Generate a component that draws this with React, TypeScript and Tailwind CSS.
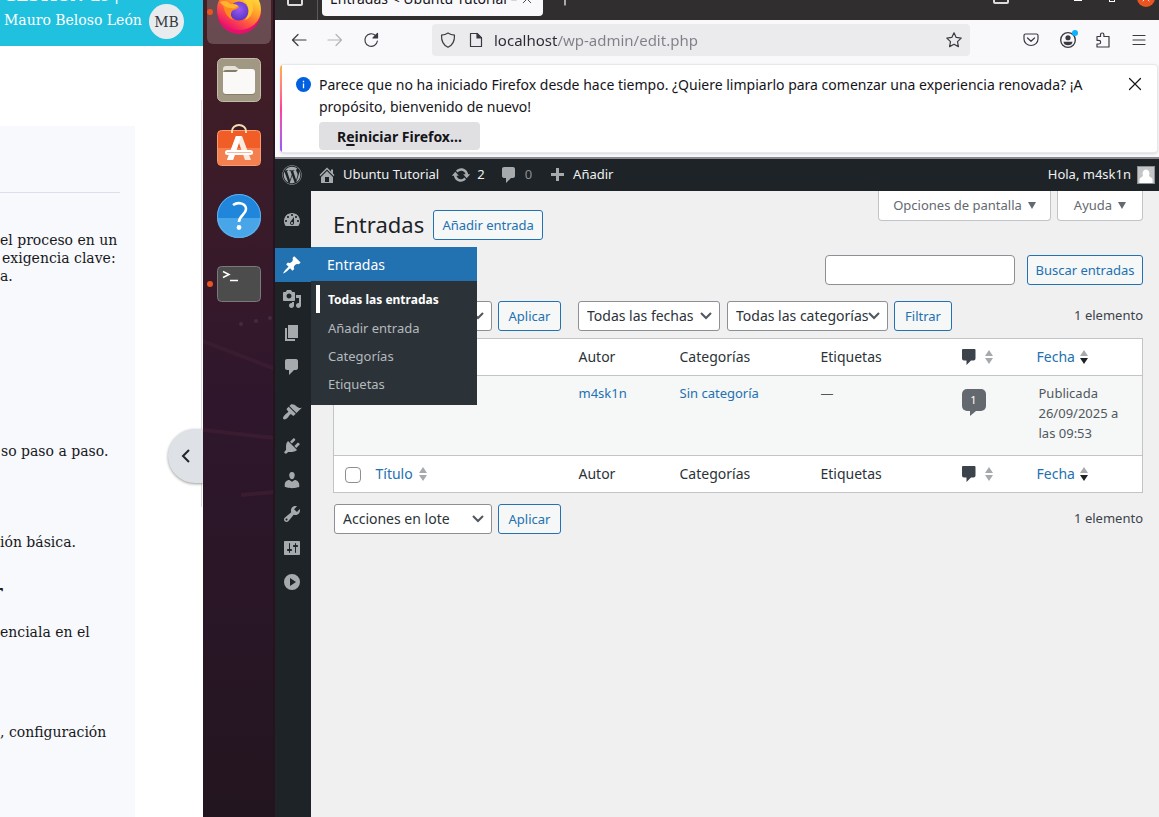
import type { ReactNode } from "react";
import { FaWordpress } from "react-icons/fa";

const dash = {
  home: "M16 8.5l1.53 1.53-1.06 1.06L10 4.6l-6.47 6.49-1.06-1.06L10 2.5l4 4v-2h2v4zm-6-2.46l6 5.99V18H4v-5.97zM12 17v-5H8v5h4z",
  update:
    "M10.2 3.28c3.53 0 6.43 2.61 6.92 6h2.08l-3.5 4-3.5-4h2.32c-.45-1.97-2.21-3.45-4.32-3.45-1.45 0-2.73.71-3.54 1.78L4.95 5.66C6.23 4.2 8.11 3.28 10.2 3.28zm-.4 13.44c-3.52 0-6.43-2.61-6.92-6H.8l3.5-4c1.17 1.33 2.33 2.67 3.5 4H5.48c.45 1.97 2.21 3.45 4.32 3.45 1.45 0 2.73-.71 3.54-1.78l1.71 1.95c-1.28 1.46-3.15 2.38-5.25 2.38z",
  comments: "M5 2h9c1.1 0 2 .9 2 2v7c0 1.1-.9 2-2 2h-2l-5 5v-5H5c-1.1 0-2-.9-2-2V4c0-1.1.9-2 2-2z",
  plus: "M17 8v3h-5v5H9v-5H4V8h5V3h3v5h5z",
  dashboard:
    "M3.76 16h12.48c1.1-1.37 1.76-3.11 1.76-5 0-4.42-3.58-8-8-8s-8 3.58-8 8c0 1.89.66 3.63 1.76 5zM10 4c.55 0 1 .45 1 1s-.45 1-1 1-1-.45-1-1 .45-1 1-1zM6 6c.55 0 1 .45 1 1s-.45 1-1 1-1-.45-1-1 .45-1 1-1zm8 0c.55 0 1 .45 1 1s-.45 1-1 1-1-.45-1-1 .45-1 1-1zm-5.37 5.55L12 7v6c0 1.1-.9 2-2 2s-2-.9-2-2c0-.57.24-1.08.63-1.45zM4 10c.55 0 1 .45 1 1s-.45 1-1 1-1-.45-1-1 .45-1 1-1zm12 0c.55 0 1 .45 1 1s-.45 1-1 1-1-.45-1-1 .45-1 1-1zm-5 3c0-.55-.45-1-1-1s-1 .45-1 1 .45 1 1 1 1-.45 1-1z",
  post: "M10.44 3.02l1.82-1.82 6.36 6.35-1.83 1.82c-1.05-.68-2.48-.57-3.41.36l-.75.75c-.92.93-1.04 2.35-.35 3.41l-1.83 1.82-2.41-2.41-2.8 2.79c-.42.42-3.38 2.71-3.8 2.29s1.86-3.39 2.28-3.81l2.79-2.79L4.1 9.36l1.83-1.82c1.05.69 2.48.57 3.4-.36l.75-.75c.93-.92 1.05-2.35.36-3.41z",
  media:
    "M13 11V4c0-.55-.45-1-1-1h-1.67L9 1H5L3.67 3H2c-.55 0-1 .45-1 1v7c0 .55.45 1 1 1h10c.55 0 1-.45 1-1zM7 4.5c1.38 0 2.5 1.12 2.5 2.5S8.38 9.5 7 9.5 4.5 8.38 4.5 7 5.62 4.5 7 4.5zM14 6h5v10.5c0 1.38-1.12 2.5-2.5 2.5S14 17.88 14 16.5s1.12-2.5 2.5-2.5c.17 0 .34.02.5.05V9h-3V6zm-4 8.05V13h2v3.5c0 1.38-1.12 2.5-2.5 2.5S7 17.88 7 16.5 8.12 14 9.5 14c.17 0 .34.02.5.05z",
  page: "M6 15V2h10v13H6zm-1 1h8v2H3V5h2v11z",
  appearance:
    "M14.48 11.06L7.41 3.99l1.5-1.5c.5-.56 2.3-.47 3.51.32 1.21.8 1.43 1.28 2.91 2.1 1.18.64 2.45 1.26 4.45.85zm-.71.71L6.7 4.7 4.93 6.47c-.39.39-.39 1.02 0 1.41l1.06 1.06c.39.39.39 1.03 0 1.42-.6.6-1.43 1.11-2.21 1.69-.35.26-.7.53-1.01.84C1.43 14.23.4 16.08 1.4 17.07c.99 1 2.84-.03 4.18-1.36.31-.31.58-.66.85-1.02.57-.78 1.08-1.61 1.69-2.21.39-.39 1.02-.39 1.41 0l1.06 1.06c.39.39 1.02.39 1.41 0z",
  plugins:
    "M13.11 4.36L9.87 7.6 8 5.73l3.24-3.24c.35-.34 1.05-.2 1.56.32.52.51.66 1.21.31 1.55zm-8 1.77l.91-1.12 9.01 9.01-1.19.84c-.71.71-2.63 1.16-3.82 1.16H6.14L4.9 17.26c-.59.59-1.54.59-2.12 0-.59-.58-.59-1.53 0-2.12l1.24-1.24v-3.88c0-1.13.4-3.19 1.09-3.89zm7.26 3.97l3.24-3.24c.34-.35 1.04-.21 1.55.31.52.51.66 1.21.31 1.55l-3.24 3.25z",
  users:
    "M10 9.25c-2.27 0-2.73-3.44-2.73-3.44C7 4.02 7.82 2 9.97 2c2.16 0 2.98 2.02 2.71 3.81 0 0-.41 3.44-2.68 3.44zm0 2.57L12.72 10c2.39 0 4.52 2.33 4.52 4.53v2.49s-3.65 1.13-7.24 1.13c-3.65 0-7.24-1.13-7.24-1.13v-2.49c0-2.25 1.94-4.48 4.47-4.48z",
  tools:
    "M16.68 9.77c-1.34 1.34-3.3 1.67-4.95.99l-5.41 6.52c-.99.99-2.59.99-3.58 0s-.99-2.59 0-3.57l6.52-5.42c-.68-1.65-.35-3.61.99-4.95 1.28-1.28 3.12-1.62 4.72-1.06l-2.89 2.89 2.82 2.82 2.86-2.87c.53 1.58.18 3.39-1.08 4.65zM3.81 16.21c.4.39 1.04.39 1.43 0 .4-.4.4-1.04 0-1.43-.39-.4-1.03-.4-1.43 0-.39.39-.39 1.03 0 1.43z",
  settings:
    "M18 16V4c0-.55-.45-1-1-1H3c-.55 0-1 .45-1 1v12c0 .55.45 1 1 1h14c.55 0 1-.45 1-1zM8 11h1c.55 0 1 .45 1 1s-.45 1-1 1H8v1.5c0 .28-.22.5-.5.5s-.5-.22-.5-.5V13H6c-.55 0-1-.45-1-1s.45-1 1-1h1V5.5c0-.28.22-.5.5-.5s.5.22.5.5V11zm5-2h-1c-.55 0-1-.45-1-1s.45-1 1-1h1V5.5c0-.28.22-.5.5-.5s.5.22.5.5V7h1c.55 0 1 .45 1 1s-.45 1-1 1h-1v5.5c0 .28-.22.5-.5.5s-.5-.22-.5-.5V9z",
  collapse: "M10 2a8 8 0 1 0 0 16a8 8 0 0 0 0-16zM8 6l6 4l-6 4z",
};

function Dashicon({ name, className }: { name: keyof typeof dash; className?: string }) {
  return (
    <svg viewBox="0 0 20 20" fill="currentColor" fillRule="evenodd" className={`size-5 shrink-0 ${className ?? ""}`} aria-hidden="true">
      <path d={dash[name]} />
    </svg>
  );
}

/* ---------- Course page at the far left ---------- */

function CoursePage() {
  return (
    <section className="relative w-[203px] shrink-0 overflow-hidden bg-white font-['DejaVu_Serif',serif] text-sm leading-[18px] text-[#16181b]">
      <header className="h-[46px] bg-[#1fc1df] text-white">
        <div className="flex h-1 items-end overflow-hidden whitespace-nowrap pl-1 text-[15px] leading-[15px]">
          <span className="w-[110px] shrink-0 font-bold">GESTIÓN de</span>
          <span>|</span>
        </div>
        <div className="flex items-center gap-1 pl-1">
          <span className="w-[141px] whitespace-nowrap pb-1">Mauro Beloso León</span>
          <span className="flex size-[35px] items-center justify-center rounded-full bg-[#e9ecef] text-[#343a40]">MB</span>
        </div>
      </header>
      <div className="mt-20 min-h-[700px] w-[135px] whitespace-nowrap bg-[#f8f9fc]">
        <div className="w-[120px] border-b border-[#dde0ea] pt-[66px]" />
        <p className="pt-[38px]">el proceso en un</p>
        <p className="pl-[2px]">exigencia clave:</p>
        <p>a.</p>
        <p className="pt-[157px] pl-[1px]">so paso a paso.</p>
        <p className="pt-[73px]">ión básica.</p>
        <p className="mt-7 h-[26px] overflow-hidden text-xl font-bold leading-[26px]">
          <span className="-ml-2">r</span>
        </p>
        <p className="pt-[18px]">enciala en el</p>
        <p className="pt-[82px]">, configuración</p>
      </div>
      <div className="absolute right-px top-[100px] h-[407px] w-px bg-[#dcdde0]" />
      <button
        aria-label="Abrir panel"
        className="absolute right-0 top-[429px] flex h-[54px] w-[35px] items-center justify-center rounded-l-full bg-[#dee2e6] shadow-[0_1px_3px_rgba(0,0,0,0.4)]"
      >
        <svg viewBox="0 0 12 16" className="h-4 w-3" fill="none" stroke="#212529" strokeWidth="2">
          <path d="M9 2L3 8l6 6" />
        </svg>
      </button>
    </section>
  );
}

/* ---------- Ubuntu dock ---------- */

function FirefoxIcon() {
  return (
    <svg viewBox="0 0 48 48" className="size-12">
      <defs>
        <linearGradient id="ffBody" x1="0.85" y1="0.1" x2="0.25" y2="0.95">
          <stop offset="0" stopColor="#ffe640" />
          <stop offset="0.4" stopColor="#ff9a27" />
          <stop offset="0.7" stopColor="#ff4f45" />
          <stop offset="1" stopColor="#e9126f" />
        </linearGradient>
        <radialGradient id="ffGlobe" cx="0.5" cy="0.4" r="0.6">
          <stop offset="0" stopColor="#9a5cf5" />
          <stop offset="1" stopColor="#5b34c4" />
        </radialGradient>
      </defs>
      <circle cx="24" cy="24" r="22" fill="#e8106c" />
      <path d="M2 22a22 20 0 0 0 44 0C46 9 37 2 24 2S2 9 2 22z" fill="url(#ffBody)" />
      <circle cx="24" cy="23" r="9.5" fill="url(#ffGlobe)" />
      <path d="M8 15c4-2 8-1 10 2 4 0 6 1 6 2-2 3-5 2-7 4-2 3-1 7 2 9-5-1-10-6-11-17z" fill="#ff8a1e" />
      <path d="M5 14c4-2 8-1 10 2 4 0 7 0 8 2-2 2-5 3-7 2-4 0-8-2-11-6z" fill="#ffb52e" />
      <path d="M28 4c9 5 12 13 9 21-1 3-4 6-7 7 6-8 4-15-1-19-3-3-2-6-1-9z" fill="#ffcf35" opacity=".8" />
    </svg>
  );
}

function FilesIcon() {
  return (
    <svg viewBox="0 0 48 48" className="size-12">
      <rect x="2.500" y="2.500" width="43" height="43" rx="5" fill="#a09883" stroke="#c2bca9" />
      <path d="M8 13a3 3 0 0 1 3-3h9l4 3v10H8z" fill="#e6e1d6" />
      <rect x="8" y="14" width="32" height="25" rx="3" fill="#857d6a" />
      <path d="M8 16h13l3-3h13a3 3 0 0 1 3 3v19a3 3 0 0 1-3 3H11a3 3 0 0 1-3-3z" fill="#faf9f8" />
    </svg>
  );
}

function SoftwareIcon() {
  return (
    <svg viewBox="0 0 48 48" className="size-12">
      <rect x="2.500" y="6.500" width="43" height="35" rx="4" fill="#f15d27" stroke="#fa9a70" />
      <path d="M3 24h42v13a4 4 0 0 1-4 4H7a4 4 0 0 1-4-4z" fill="#f5804f" />
      <path d="M17 9V7a7 6 0 0 1 14 0v2" fill="none" stroke="#f6dcae" strokeWidth="2" />
      <path d="M21 12h6l9 24h-6l-6-17-6 17h-6z" fill="#f9e9e0" />
      <path d="M21 12h5l-8 24h-6z" fill="#fff" />
      <rect x="10" y="26" width="28" height="5" rx="2.500" fill="#fff" />
      <path d="M12 28.500h24" stroke="#f5b9a0" strokeWidth="1" />
    </svg>
  );
}

function HelpIcon() {
  return (
    <svg viewBox="0 0 48 48" className="size-12">
      <circle cx="24" cy="24" r="22" fill="#1f86dc" />
      <path d="M2 26a22 20 0 0 0 44 0z" fill="#48a5e8" />
      <circle cx="24" cy="24" r="21.500" fill="none" stroke="#62b2ec" strokeWidth="1" />
      <path d="M18 13c6-4 13-1 13 4 0 6-7 6-7 13" fill="none" stroke="#fff" strokeWidth="2.600" />
      <circle cx="24" cy="35.500" r="2.400" fill="#fff" />
    </svg>
  );
}

function TerminalIcon() {
  return (
    <svg viewBox="0 0 48 48" className="size-12">
      <rect x="2.500" y="6.500" width="43" height="35" rx="4" fill="#4c4c4c" stroke="#7a7a7a" />
      <path d="M8 11.500l6 3-6 3" fill="none" stroke="#fff" strokeWidth="1.500" />
      <path d="M15 20.500h8" stroke="#fff" strokeWidth="1.500" />
    </svg>
  );
}

function DockItem({ label, active, running, children }: { label: string; active?: boolean; running?: boolean; children: ReactNode }) {
  return (
    <button aria-label={label} className={`relative flex size-16 items-center justify-center rounded-md ${active ? "bg-white/20" : ""}`}>
      {running && <span className="absolute left-0 top-[29px] size-[6px] rounded-full bg-[#e95420]" />}
      {children}
    </button>
  );
}

function Dock() {
  return (
    <nav
      aria-label="Dock"
      className="relative w-[72px] shrink-0 overflow-hidden border-r-2 border-[#25141f] bg-linear-to-b from-[#451f25] via-[#2f162c] via-50% to-[#231520]"
    >
      <svg viewBox="0 0 72 200" className="absolute left-0 top-[312px] h-[200px] w-[72px]" fill="none" stroke="#3a1c30" strokeWidth="4">
        <path d="M0 29l72 28M0 118l72 8M38 183l34-3" />
        <g fill="#452b42" stroke="none">
          <circle cx="38" cy="12" r="2" />
          <circle cx="53" cy="9" r="2" />
          <circle cx="67" cy="6" r="2" />
        </g>
      </svg>
      <div className="-mt-5 flex flex-col gap-1 pl-1">
        <DockItem label="Firefox" active running>
          <FirefoxIcon />
        </DockItem>
        <DockItem label="Archivos">
          <FilesIcon />
        </DockItem>
        <DockItem label="Software">
          <SoftwareIcon />
        </DockItem>
        <DockItem label="Ayuda de Ubuntu">
          <HelpIcon />
        </DockItem>
        <DockItem label="Terminal" running>
          <TerminalIcon />
        </DockItem>
      </div>
    </nav>
  );
}

/* ---------- Firefox chrome ---------- */

function Line({ children, className }: { children: ReactNode; className?: string }) {
  return (
    <svg viewBox="0 0 16 16" className={`shrink-0 ${className ?? "size-4"}`} fill="none" stroke="currentColor" strokeWidth="1.200" strokeLinecap="round" strokeLinejoin="round" aria-hidden="true">
      {children}
    </svg>
  );
}

function TabBar() {
  return (
    <div className="flex h-5 items-end overflow-hidden bg-[#302e2f] text-[#fbfbfe]">
      <span className="mb-[14px] ml-3 h-3 w-4 shrink-0 rounded-[2px] border-2 border-[#dcdcde]" />
      <span className="ml-[14px] h-5 w-px bg-[#5b595a]" />
      <div className="mb-1 ml-1 flex h-[34px] w-[221px] shrink-0 items-center justify-between rounded-[4px] bg-[#f9f9fb] pl-2 pr-[11px] text-sm text-[#15141a]">
        <span className="w-[190px] overflow-hidden whitespace-nowrap">Entradas &lt; Ubuntu Tutorial –</span>
        <Line className="size-[10px]">
          <path d="M2 2l12 12M14 2L2 14" />
        </Line>
      </div>
      <Line className="mb-[14px] ml-[14px] size-4">
        <path d="M8 1v14M1 8h14" />
      </Line>
      <div className="ml-auto flex items-end pb-[13px]">
        <span className="mb-[3px] mr-[65px] h-4 w-4 rounded-[2px] border-2 border-[#dcdcde]" />
        <span className="mb-[6px] mr-[27px] h-px w-2 bg-white" />
        <span className="mb-[5px] mr-[22px] h-[7px] w-[6px] border border-white" />
        <span className="mr-1 flex size-[18px] items-center justify-center rounded-full bg-[#e95420]">
          <Line className="size-3">
            <path d="M4 4l8 8M12 4l-8 8" />
          </Line>
        </span>
      </div>
    </div>
  );
}

function Toolbar() {
  return (
    <div className="flex h-[44px] items-center bg-[#f9f9fb] pl-4 pr-3 pb-1 text-[#3b3a42]">
      <Line className="size-4">
        <path d="M15 8H1.500M7 2.500L1.500 8L7 13.500" />
      </Line>
      <Line className="ml-5 size-4 text-[#b3b3b7]">
        <path d="M1 8h13.500M9 2.500L14.500 8L9 13.500" />
      </Line>
      <Line className="ml-5 size-4">
        <path d="M12.500 3.500a6.300 6.300 0 1 0 1.900 5.500" />
        <path d="M14.500 1.500v4.500H10z" fill="currentColor" />
      </Line>
      <div className="ml-[53px] flex h-8 w-[538px] shrink items-center rounded-[4px] bg-[#ebebed] px-2">
        <Line>
          <path d="M8 1c2.300 1.500 4.500 2 6.500 2.200C14.700 9.500 12 13.500 8 15.300C4 13.500 1.300 9.500 1.500 3.200C3.500 3 5.700 2.500 8 1z" />
        </Line>
        <Line className="ml-3 size-4">
          <path d="M2.500 1.500h6.500l4.500 4.500v8.500h-11z" />
          <path d="M9 1.500v4.500h4.500z" fill="currentColor" />
        </Line>
        <input
          aria-label="Dirección"
          defaultValue="localhost/wp-admin/edit.php"
          className="ml-[10px] min-w-0 grow bg-linear-to-r from-[#2b2a33] from-[64px] to-[#7f7f88] to-[64px] bg-clip-text text-[15px] text-transparent outline-none"
        />
        <Line>
          <path d="M8 .8l2.200 4.600 5 .7-3.700 3.500.9 5L8 12.200 3.600 14.600l.9-5L.8 6.100l5-.7z" />
        </Line>
      </div>
      <Line className="ml-auto size-4">
        <path d="M2.500 2h11a1.500 1.500 0 0 1 1.500 1.500V7a7 6.500 0 0 1-14 0V3.500A1.500 1.500 0 0 1 2.500 2zM4.500 6l3.500 3.300L11.500 6" />
      </Line>
      <span className="relative ml-5 flex">
        <Line className="size-[18px]">
          <circle cx="8" cy="8" r="6.500" />
          <circle cx="8" cy="6" r="2.300" fill="currentColor" stroke="none" />
          <path d="M4 9.500h8c0 2-1.800 3.200-4 3.200s-4-1.200-4-3.200z" fill="currentColor" stroke="none" />
        </Line>
        <span className="absolute -right-px -top-px size-[6px] rounded-full bg-[#0ab2ff]" />
      </span>
      <Line className="ml-[18px] size-4">
        <path d="M2 4.500h3.500V2.700a1.700 1.700 0 0 1 3.400 0v1.800H14V15H2v-3h1.800a1.700 1.700 0 0 0 0-3.700H2z" />
      </Line>
      <Line className="ml-5 size-4">
        <path d="M2 3.500h12M2 8h12M2 12.500h12" />
      </Line>
    </div>
  );
}

function Notice() {
  return (
    <div className="border-b-2 border-[#8a8a8e] bg-[#f9f9fb] pb-1 pl-[5px] pr-px">
      <div className="flex overflow-hidden rounded-[4px] border border-[#e8e8ea] border-l-0 bg-white text-sm leading-[22px] text-[#15141a] shadow-sm">
        <span className="w-[2px] shrink-0 bg-linear-to-b from-[#ffb13b] via-[#ff3d9a] to-[#9059ff]" />
        <svg viewBox="0 0 16 16" className="ml-[14px] mt-3 size-[15px] shrink-0" aria-hidden="true">
          <circle cx="8" cy="8" r="8" fill="#0060df" />
          <path d="M8 7v5M8 4v1.500" stroke="#fff" strokeWidth="1.400" />
        </svg>
        <div className="ml-2 grow pb-[2px] pt-[9px]">
          <p className="max-w-[780px]">
            Parece que no ha iniciado Firefox desde hace tiempo. ¿Quiere limpiarlo para comenzar una experiencia renovada? ¡A propósito, bienvenido de nuevo!
          </p>
          <button className="mt-1 h-7 w-[161px] rounded-[4px] bg-[#e0e0e2] pt-[2px] font-bold">
            R<span className="underline underline-offset-2 decoration-2">e</span>iniciar Firefox…
          </button>
        </div>
        <button aria-label="Cerrar aviso" className="mr-[14px] mt-[11px] size-4">
          <Line>
            <path d="M2.500 2.500l11 11M13.500 2.500l-11 11" />
          </Line>
        </button>
      </div>
    </div>
  );
}

/* ---------- WordPress admin ---------- */

function AdminBar() {
  return (
    <div className="flex h-8 items-center bg-[#1d2327] pl-[7px] pr-1 text-[13px] text-[#f0f0f1]">
      <FaWordpress className="size-5 text-[#a7aaad]" />
      <a href="#sitio" className="ml-[15px] flex items-center gap-[6px]">
        <Dashicon name="home" className="text-[#a7aaad]" />
        Ubuntu Tutorial
      </a>
      <a href="#actualizaciones" className="ml-3 flex items-center gap-[6px]">
        <Dashicon name="update" className="text-[#a7aaad]" />2
      </a>
      <a href="#comentarios" className="ml-[14px] flex items-center gap-[6px] text-[#8c8f94]">
        <Dashicon name="comments" className="text-[#a7aaad]" />0
      </a>
      <a href="#nuevo" className="ml-[15px] flex items-center gap-[6px]">
        <Dashicon name="plus" className="text-[#a7aaad]" />
        Añadir
      </a>
      <a href="#perfil" className="ml-auto flex items-center gap-[6px]">
        Hola, m4sk1n
        <svg viewBox="0 0 18 18" className="size-[18px]" aria-hidden="true">
          <rect width="18" height="18" fill="#8c8f94" />
          <rect x="1" y="1" width="16" height="16" fill="#c5c5c5" />
          <path d="M9 3.500a3.600 4 0 0 1 3 6c.2 1.500 3 2 3.500 3.500v4h-13v-4c.5-1.500 3.300-2 3.500-3.500a3.600 4 0 0 1 3-6z" fill="#fff" />
        </svg>
      </a>
    </div>
  );
}

const subItems = ["Añadir entrada", "Categorías", "Etiquetas"];

function MenuItem({ name, label }: { name: keyof typeof dash; label: string }) {
  return (
    <a href={`#${name}`} aria-label={label} className="flex h-[34px] items-center pl-[7px] text-[#a7aaad]">
      <Dashicon name={name} />
    </a>
  );
}

function AdminMenu() {
  return (
    <nav aria-label="Menú principal" className="w-9 shrink-0 bg-[#1d2327] pt-3">
      <MenuItem name="dashboard" label="Escritorio" />
      <div className="relative z-10 mt-[11px]">
        <a href="#entradas" aria-label="Entradas" className="flex h-[34px] items-center bg-[#2271b1] pl-[7px] text-white">
          <Dashicon name="post" />
        </a>
        <div className="absolute -top-px left-9 w-[166px] bg-[#2c3338] pb-[6px] text-[13px] text-[#b4b9be]">
          <div className="flex h-[34px] items-center bg-[#2271b1] pl-4 pt-[2px] text-sm text-white">Entradas</div>
          <a href="#todas" className="ml-[5px] mt-1 flex h-7 items-center border-l-4 border-white pl-2 pt-[2px] text-xs font-bold text-white">
            Todas las entradas
          </a>
          <div className="pt-[2px]">
            {subItems.map((t) => (
              <a key={t} href={`#${t}`} className="flex h-7 items-center pl-[17px]">
                {t}
              </a>
            ))}
          </div>
        </div>
      </div>
      <MenuItem name="media" label="Medios" />
      <MenuItem name="page" label="Páginas" />
      <MenuItem name="comments" label="Comentarios" />
      <div className="h-[11px]" />
      <MenuItem name="appearance" label="Apariencia" />
      <MenuItem name="plugins" label="Plugins" />
      <MenuItem name="users" label="Usuarios" />
      <MenuItem name="tools" label="Herramientas" />
      <MenuItem name="settings" label="Ajustes" />
      <MenuItem name="collapse" label="Cerrar menú" />
    </nav>
  );
}

function WpButton({ children, className }: { children: ReactNode; className: string }) {
  return (
    <button className={`h-[30px] shrink-0 whitespace-nowrap rounded-[3px] border border-[#2271b1] bg-[#f6f7f7] pt-[2px] text-[13px] text-[#2271b1] ${className}`}>
      {children}
    </button>
  );
}

function WpSelect({ label, text, className }: { label: string; text: string; className: string }) {
  return (
    <div className={`relative shrink-0 ${className}`}>
      <select
        aria-label={label}
        className="h-[30px] w-full appearance-none rounded-[3px] border border-[#8c8f94] bg-white pl-2 text-sm leading-[28px] text-[#2c3338]"
      >
        <option>{text}</option>
      </select>
      <svg viewBox="0 0 12 8" className="pointer-events-none absolute right-2 top-[11px] h-2 w-3" fill="none" stroke="#50575e" strokeWidth="2" aria-hidden="true">
        <path d="M1 1l5 5 5-5" />
      </svg>
    </div>
  );
}

function SortArrows({ down }: { down?: boolean }) {
  return (
    <svg viewBox="0 0 8 14" className="h-[14px] w-2 shrink-0" aria-hidden="true">
      <path d="M0 6L4 0l4 6z" fill="#a7aaad" />
      <path d="M0 8h8l-4 6z" fill={down ? "#1d2327" : "#a7aaad"} />
    </svg>
  );
}

function CommentGlyph() {
  return (
    <svg viewBox="0 0 14 16" className="h-4 w-[14px] shrink-0 text-[#3c434a]" fill="currentColor" aria-hidden="true">
      <path d="M1 0h11.500a1 1 0 0 1 1 1v8.500a2 2 0 0 1-2 2H9L4.500 16v-4.500H2a2 2 0 0 1-2-2V1a1 1 0 0 1 1-1z" />
    </svg>
  );
}

function HeadingRow({ title }: { title?: boolean }) {
  return (
    <tr className="h-[37px] bg-white text-left text-sm text-[#2c3338]">
      <td className="pl-[11px] pt-[2px] align-middle">
        <input type="checkbox" aria-label="Seleccionar todo" className="block size-4 appearance-none rounded-[4px] border border-[#8c8f94] bg-white" />
      </td>
      <th className="pl-[10px] font-normal">
        {title && (
          <a href="#titulo" className="flex items-center gap-[6px] text-[#2271b1]">
            Título <SortArrows />
          </a>
        )}
      </th>
      <th className="pl-[10px] font-normal">Autor</th>
      <th className="pl-[10px] font-normal">Categorías</th>
      <th className="pl-[10px] font-normal">Etiquetas</th>
      <th className="pl-[10px] font-normal">
        <a href="#comentarios" aria-label="Comentarios" className="flex items-center gap-[9px]">
          <CommentGlyph />
          <SortArrows />
        </a>
      </th>
      <th className="pl-[10px] font-normal">
        <a href="#fecha" className="flex items-center gap-[5px] text-[#2271b1]">
          Fecha <SortArrows down />
        </a>
      </th>
    </tr>
  );
}

function PostsTable() {
  return (
    <table className="mt-[7px] w-full table-fixed border-collapse border border-[#c3c4c7] text-[13px] leading-[20px] text-[#50575e]">
      <colgroup>
        <col className="w-8" />
        <col />
        <col className="w-[101px]" />
        <col className="w-[141px]" />
        <col className="w-[141px]" />
        <col className="w-[75px]" />
        <col className="w-[116px]" />
      </colgroup>
      <thead className="border-b border-[#c3c4c7]">
        <HeadingRow />
      </thead>
      <tbody>
        <tr className="h-20 bg-[#f6f7f7] align-top">
          <td />
          <td />
          <td className="py-[7px] pl-[10px]">
            <a href="#autor" className="text-[#2271b1]">
              m4sk1n
            </a>
          </td>
          <td className="py-[7px] pl-[10px]">
            <a href="#categoria" className="text-[#2271b1]">
              Sin categoría
            </a>
          </td>
          <td className="py-[7px] pl-[10px]">—</td>
          <td className="pl-[10px] pt-[13px]">
            <a href="#comentario" className="flex w-6 flex-col text-[#646970]">
              <span className="flex h-[22px] items-center justify-center rounded-[5px] bg-[#646970] text-[11px] text-white">1</span>
              <svg viewBox="0 0 6 5" className="ml-2 h-[5px] w-[6px]" fill="currentColor" aria-hidden="true">
                <path d="M0 0h6L0 5z" />
              </svg>
            </a>
          </td>
          <td className="whitespace-nowrap py-[7px] pl-3">
            Publicada
            <br />
            26/09/2025 a
            <br />
            las 09:53
          </td>
        </tr>
      </tbody>
      <tfoot className="border-t border-[#c3c4c7]">
        <HeadingRow title />
      </tfoot>
    </table>
  );
}

function PostsScreen() {
  return (
    <main className="min-w-0 grow bg-[#f0f0f1] pl-[22px] pr-4">
      <div className="flex items-start">
        <h1 className="pt-[18px] text-[22px] leading-[30px] text-[#1d2327]">Entradas</h1>
        <div className="pl-[9px] pt-[19px]">
          <WpButton className="w-[110px]">Añadir entrada</WpButton>
        </div>
        <div className="ml-auto flex gap-[6px] text-[13px] text-[#646970]">
          <button className="flex h-[30px] w-[173px] items-center justify-center gap-[6px] whitespace-nowrap rounded-b-[4px] border border-t-0 border-[#c3c4c7] bg-white">
            Opciones de pantalla
            <svg viewBox="0 0 8 7" className="h-[7px] w-2" fill="currentColor">
              <path d="M0 0h8L4 7z" />
            </svg>
          </button>
          <button className="flex h-[30px] w-[86px] items-center justify-center gap-[6px] rounded-b-[4px] border border-t-0 border-[#c3c4c7] bg-white">
            Ayuda
            <svg viewBox="0 0 8 7" className="h-[7px] w-2" fill="currentColor">
              <path d="M0 0h8L4 7z" />
            </svg>
          </button>
        </div>
      </div>
      <div className="mt-[15px] flex justify-end gap-3">
        <input type="search" aria-label="Buscar entradas" className="h-[30px] w-[190px] rounded-[4px] border border-[#8c8f94] bg-white px-2 text-sm" />
        <WpButton className="w-[116px]">Buscar entradas</WpButton>
      </div>
      <div className="mt-4 flex items-center">
        <WpSelect label="Acciones en lote" text="Acciones en lote" className="ml-px w-[158px]" />
        <WpButton className="ml-[6px] w-[63px]">Aplicar</WpButton>
        <WpSelect label="Filtrar por fecha" text="Todas las fechas" className="ml-[17px] w-[142px]" />
        <WpSelect label="Filtrar por categoría" text="Todas las categorías" className="ml-[7px] w-[161px]" />
        <WpButton className="ml-[6px] w-[58px]">Filtrar</WpButton>
        <span className="ml-auto whitespace-nowrap text-[13px] text-[#3c434a]">1 elemento</span>
      </div>
      <PostsTable />
      <div className="mt-[11px] flex items-center">
        <WpSelect label="Acciones en lote" text="Acciones en lote" className="ml-px w-[158px]" />
        <WpButton className="ml-[6px] w-[63px]">Aplicar</WpButton>
        <span className="ml-auto text-[13px] text-[#3c434a]">1 elemento</span>
      </div>
    </main>
  );
}

export default function App() {
  return (
    <div className="flex h-screen overflow-hidden font-['Noto_Sans',sans-serif]">
      <CoursePage />
      <Dock />
      <div className="flex min-w-0 grow flex-col">
        <TabBar />
        <Toolbar />
        <Notice />
        <AdminBar />
        <div className="flex grow">
          <AdminMenu />
          <PostsScreen />
        </div>
      </div>
    </div>
  );
}
